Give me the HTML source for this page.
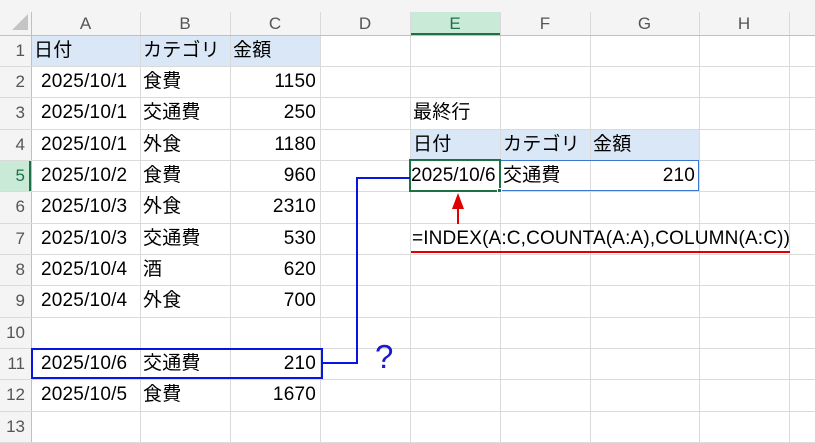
<!DOCTYPE html><html><head><meta charset="utf-8"><style>
*{margin:0;padding:0;box-sizing:border-box}
body{width:815px;height:443px;background:#fff;position:relative;overflow:hidden;font-family:"Liberation Sans","Noto Sans CJK JP",sans-serif;font-size:19px;letter-spacing:0.2px;color:#000}
.a{position:absolute}
.v{position:absolute;top:12px;bottom:0;width:1px;background:#dadada}
.h{position:absolute;left:0;right:0;height:1px;background:#dadada}
.ch{position:absolute;top:12px;height:23px;line-height:23px;text-align:center;color:#555;font-size:17px;letter-spacing:0}
.rh{position:absolute;left:0;width:31px;text-align:right;padding-right:6px;color:#555;font-size:17px;height:31px;line-height:31px;letter-spacing:0}
.c{position:absolute;height:31px;line-height:31px;white-space:nowrap}
.r{text-align:right;padding-right:4px}
</style></head><body>
<div class="a" style="left:0;top:0;width:815px;height:35px;background:#f4f4f4"></div>
<div class="a" style="left:0;top:0;width:31px;height:443px;background:#f4f4f4"></div>
<div class="a" style="left:12px;top:14px;width:0;height:0;border-left:16px solid transparent;border-bottom:16px solid #c4c4c4"></div>
<div class="a" style="left:410px;top:12px;width:90px;height:23px;background:#c8ead6;border-bottom:2px solid #1e7145"></div>
<div class="a" style="left:0;top:160px;width:31px;height:31px;background:#c8ead6;border-right:2px solid #1e7145"></div>
<div class="a" style="left:31px;top:35px;width:289px;height:31px;background:#d9e7f6"></div>
<div class="a" style="left:410px;top:129px;width:289px;height:31px;background:#d9e7f6"></div>
<div class="v" style="left:31px;background:#c0c0c0"></div>
<div class="v" style="left:140px"></div><div class="v" style="left:230px"></div><div class="v" style="left:320px"></div><div class="v" style="left:410px"></div><div class="v" style="left:500px"></div><div class="v" style="left:590px"></div><div class="v" style="left:699px"></div><div class="v" style="left:789px"></div>
<div class="h" style="top:35px;background:#c0c0c0"></div>
<div class="h" style="top:66px"></div><div class="h" style="top:97px"></div><div class="h" style="top:129px"></div><div class="h" style="top:160px"></div><div class="h" style="top:191px"></div><div class="h" style="top:223px"></div><div class="h" style="top:254px"></div><div class="h" style="top:285px"></div><div class="h" style="top:317px"></div><div class="h" style="top:348px"></div><div class="h" style="top:379px"></div><div class="h" style="top:411px"></div><div class="h" style="top:442px"></div>
<div class="ch" style="left:31px;width:109px">A</div><div class="ch" style="left:140px;width:90px">B</div><div class="ch" style="left:230px;width:90px">C</div><div class="ch" style="left:320px;width:90px">D</div><div class="ch" style="left:410px;width:90px;color:#1e7145">E</div><div class="ch" style="left:500px;width:90px">F</div><div class="ch" style="left:590px;width:109px">G</div><div class="ch" style="left:699px;width:90px">H</div>
<div class="rh" style="top:35px">1</div><div class="rh" style="top:66px">2</div><div class="rh" style="top:97px">3</div><div class="rh" style="top:129px">4</div><div class="rh" style="top:160px;color:#1e7145">5</div><div class="rh" style="top:191px">6</div><div class="rh" style="top:223px">7</div><div class="rh" style="top:254px">8</div><div class="rh" style="top:285px">9</div><div class="rh" style="top:317px">10</div><div class="rh" style="top:348px">11</div><div class="rh" style="top:379px">12</div><div class="rh" style="top:411px">13</div>

<div class="c" style="left:34px;top:35px">日付</div><div class="c" style="left:143px;top:35px">カテゴリ</div><div class="c" style="left:233px;top:35px">金額</div>
<div class="c" style="left:41px;top:66px">2025/10/1</div><div class="c" style="left:143px;top:66px">食費</div><div class="c r" style="left:230px;width:90px;top:66px">1150</div>
<div class="c" style="left:41px;top:97px">2025/10/1</div><div class="c" style="left:143px;top:97px">交通費</div><div class="c r" style="left:230px;width:90px;top:97px">250</div>
<div class="c" style="left:41px;top:129px">2025/10/1</div><div class="c" style="left:143px;top:129px">外食</div><div class="c r" style="left:230px;width:90px;top:129px">1180</div>
<div class="c" style="left:41px;top:160px">2025/10/2</div><div class="c" style="left:143px;top:160px">食費</div><div class="c r" style="left:230px;width:90px;top:160px">960</div>
<div class="c" style="left:41px;top:191px">2025/10/3</div><div class="c" style="left:143px;top:191px">外食</div><div class="c r" style="left:230px;width:90px;top:191px">2310</div>
<div class="c" style="left:41px;top:223px">2025/10/3</div><div class="c" style="left:143px;top:223px">交通費</div><div class="c r" style="left:230px;width:90px;top:223px">530</div>
<div class="c" style="left:41px;top:254px">2025/10/4</div><div class="c" style="left:143px;top:254px">酒</div><div class="c r" style="left:230px;width:90px;top:254px">620</div>
<div class="c" style="left:41px;top:285px">2025/10/4</div><div class="c" style="left:143px;top:285px">外食</div><div class="c r" style="left:230px;width:90px;top:285px">700</div>
<div class="c" style="left:41px;top:348px">2025/10/6</div><div class="c" style="left:143px;top:348px">交通費</div><div class="c r" style="left:230px;width:90px;top:348px">210</div>
<div class="c" style="left:41px;top:379px">2025/10/5</div><div class="c" style="left:143px;top:379px">食費</div><div class="c r" style="left:230px;width:90px;top:379px">1670</div>

<div class="c" style="left:413px;top:97px">最終行</div>
<div class="c" style="left:413px;top:129px">日付</div><div class="c" style="left:503px;top:129px">カテゴリ</div><div class="c" style="left:593px;top:129px">金額</div>
<div class="a" style="left:410px;top:160px;width:289px;height:31px;border:1.5px solid #3a78d0"></div>
<div class="c" style="left:411px;top:160px;letter-spacing:0">2025/10/6</div><div class="c" style="left:503px;top:160px">交通費</div><div class="c r" style="left:590px;width:109px;top:160px">210</div>
<div class="a" style="left:409px;top:159px;width:92px;height:33px;border:2px solid #1e7145"></div>
<div class="a" style="left:497px;top:188px;width:5px;height:5px;background:#1e7145;border:1px solid #fff"></div>
<div class="c" style="left:412px;top:223px;letter-spacing:0.15px">=INDEX(A:C,COUNTA(A:A),COLUMN(A:C))</div>
<div class="a" style="left:411px;top:251px;width:379px;height:2px;background:#e00000"></div>

<div class="a" style="left:31px;top:348px;width:292px;height:31px;border:2px solid #0a14e0"></div>
<svg class="a" style="left:0;top:0" width="815" height="443">
<polyline points="323,363 357,363 357,178 410,178" fill="none" stroke="#0a14e0" stroke-width="2"/>
<line x1="458" y1="224" x2="458" y2="208" stroke="#e00000" stroke-width="2"/>
<polygon points="452,209 464,209 458,193" fill="#e00000"/>
</svg>
<div class="a" style="left:375px;top:337px;font-size:33px;line-height:40px;color:#1a1ad0">?</div>
</body></html>
